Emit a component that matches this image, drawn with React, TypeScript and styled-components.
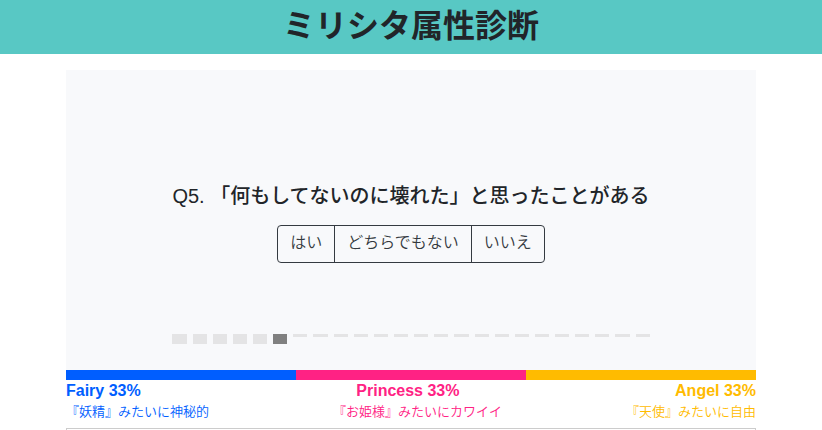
import React, { useState } from "react";
import styled, { createGlobalStyle } from "styled-components";

const GlobalStyle = createGlobalStyle`
  *, *::before, *::after { box-sizing: border-box; }
  body {
    margin: 0;
    background: #fff;
    color: #212529;
    font-family: "Liberation Sans", "Noto Sans CJK JP", sans-serif;
    font-size: 16px;
    line-height: 24px;
  }
`;

const Header = styled.header`
  background: #58c8c4;
  text-align: center;
`;

const Title = styled.h1`
  margin: 0;
  padding: 2px 0 4px;
  font-size: 32px;
  line-height: 48px;
  font-weight: 700;
`;

const Main = styled.main`
  margin: 16px auto 0;
  padding: 0 66px;
`;

const Panel = styled.section`
  display: flex;
  justify-content: center;
  background: #f8f9fb;
  padding: 114px 16px 26px;
`;

const QuestionBlock = styled.div`
  display: flex;
  flex-direction: column;
`;

const Question = styled.h2`
  margin: 0 0 17px;
  font-size: 20px;
  line-height: 24px;
  font-weight: 500;
`;

const Answers = styled.div`
  display: flex;
  justify-content: center;
`;

const AnswerButton = styled.button`
  height: 38px;
  padding: 0 12px 2px;
  margin-left: -1px;
  border: 1px solid #343a40;
  background: transparent;
  color: #343a40;
  font: inherit;
  font-weight: 350;
  cursor: pointer;
  &:first-child { margin-left: 0; border-radius: 4px 0 0 4px; }
  &:last-child { border-radius: 0 4px 4px 0; }
`;

const Steps = styled.ol`
  display: flex;
  align-items: flex-start;
  gap: 6px;
  height: 10px;
  margin: 71px 0 0;
  padding: 0;
  list-style: none;
`;

const Step = styled.li<{ $state: "done" | "current" | "todo" }>`
  flex: 1;
  height: ${(p) => (p.$state === "todo" ? 3 : 10)}px;
  background: ${(p) => (p.$state === "current" ? "#808080" : "#e4e4e5")};
`;

const Bar = styled.div`
  display: flex;
  height: 10px;
`;

const Segment = styled.div<{ $color: string }>`
  flex: 1;
  background: ${(p) => p.$color};
`;

const ResultRow = styled.div`
  display: flex;
  justify-content: space-between;
`;

const ResultName = styled.strong<{ $color: string }>`
  color: ${(p) => p.$color};
  font-weight: 700;
  line-height: 22px;
`;

const ResultNote = styled.span<{ $color: string }>`
  color: ${(p) => p.$color};
  font-size: 13px;
  font-weight: 350;
  line-height: 20px;
`;

const Details = styled.div`
  height: 2px;
  margin-top: 6px;
  border: 1px solid #ccc;
  border-bottom: 0;
`;

const answers = ["はい", "どちらでもない", "いいえ"];
const questionCount = 24;

const types = [
  { name: "Fairy", note: "『妖精』みたいに神秘的", color: "#005eff" },
  { name: "Princess", note: "『お姫様』みたいにカワイイ", color: "#ff2284" },
  { name: "Angel", note: "『天使』みたいに自由", color: "#ffbb00" },
];

export default function App() {
  const [current] = useState(5);
  return (
    <>
      <GlobalStyle />
      <Header>
        <Title>ミリシタ属性診断</Title>
      </Header>
      <Main>
        <Panel>
          <QuestionBlock>
            <Question>Q5. 「何もしてないのに壊れた」と思ったことがある</Question>
            <Answers role="group">
              {answers.map((a) => (
                <AnswerButton key={a} type="button">{a}</AnswerButton>
              ))}
            </Answers>
            <Steps>
              {Array.from({ length: questionCount }, (_, i) => (
                <Step key={i} $state={i < current ? "done" : i === current ? "current" : "todo"} />
              ))}
            </Steps>
          </QuestionBlock>
        </Panel>
        <Bar>
          {types.map((t) => <Segment key={t.name} $color={t.color} />)}
        </Bar>
        <ResultRow>
          {types.map((t) => (
            <ResultName key={t.name} $color={t.color}>{t.name} 33%</ResultName>
          ))}
        </ResultRow>
        <ResultRow>
          {types.map((t) => (
            <ResultNote key={t.name} $color={t.color}>{t.note}</ResultNote>
          ))}
        </ResultRow>
        <Details />
      </Main>
    </>
  );
}
